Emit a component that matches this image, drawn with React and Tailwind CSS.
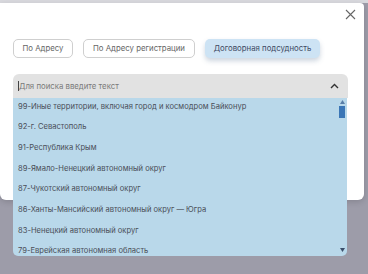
import React from "react";

const items = [
  "99-Иные территории, включая город и космодром Байконур",
  "92-г. Севастополь",
  "91-Республика Крым",
  "89-Ямало-Ненецкий автономный округ",
  "87-Чукотский автономный округ",
  "86-Ханты-Мансийский автономный округ — Югра",
  "83-Ненецкий автономный округ",
  "79-Еврейская автономная область",
];

export default function App() {
  return (
    <div
      className="relative w-[368px] h-[274px] overflow-hidden bg-[#9d9ca9]"
      style={{ fontFamily: "Inter, 'Noto Sans', sans-serif" }}
    >
      <div className="h-[3px] bg-[#d9d9de]" />
      <div className="w-[364px] h-[197px] bg-white rounded-b-[6px] rounded-tr-[4px] shadow-[0_2px_6px_rgba(0,0,0,0.15)] pt-[6px] px-[13px]">
        <div className="flex justify-end pr-[1px]">
          <svg width="11" height="11" viewBox="0 0 11 11" className="mr-[-6px]">
            <path d="M1 1L10 10M10 1L1 10" stroke="#666" strokeWidth="1.1" />
          </svg>
        </div>
        <div className="flex gap-[10px] mt-[19px]">
          <div className="h-[19px] w-[60px] flex items-center justify-center rounded-[5px] border border-[#cfcfcf] text-[7.8px] text-[#666]">
            По Адресу
          </div>
          <div className="h-[19px] w-[112px] flex items-center justify-center rounded-[5px] border border-[#cfcfcf] text-[7.8px] text-[#666]">
            По Адресу регистрации
          </div>
          <div className="h-[19px] w-[115px] flex items-center justify-center rounded-[5px] bg-[#cde3f4] text-[7.8px] text-[#3d4a63] shadow-[0_3px_5px_rgba(60,90,130,0.25)]">
            Договорная подсудность
          </div>
        </div>
        <div className="mt-[16px] w-[335px] h-[24px] bg-[#e2e2e2] rounded-t-[6px] flex items-center pl-[5px] pr-[9px]">
          <div className="w-px h-[10px] bg-[#444]" />
          <span className="text-[7.8px] text-[#7a7a7a] pt-[1px]">Для поиска введите текст</span>
          <svg width="9" height="6" viewBox="0 0 9 6" className="ml-auto">
            <path d="M1 5L4.5 1.5L8 5" fill="none" stroke="#333" strokeWidth="1.4" />
          </svg>
        </div>
      </div>
      <div className="absolute left-[13px] top-[98px] w-[334px] h-[158px] bg-[#b9d8ea] rounded-b-[5px] overflow-hidden flex">
        <div className="flex-1 flex flex-col mt-[-2px]">
          {items.map((t) => (
            <div key={t} className="shrink-0 h-[20.7px] flex items-center pl-[5px] text-[7.6px] text-[#4a4e58] whitespace-nowrap">
              {t}
            </div>
          ))}
        </div>
        <div className="w-[8px] mr-[1px] flex flex-col items-center pt-[2px]">
          <svg width="5" height="4" viewBox="0 0 5 4">
            <path d="M0 4L2.5 0L5 4Z" fill="#5a7fa8" />
          </svg>
          <div className="mt-[2px] w-[6px] h-[12px] bg-[#3b76b6]" />
          <div className="flex-1" />
          <svg width="5" height="4" viewBox="0 0 5 4" className="mb-[4px]">
            <path d="M0 0L5 0L2.5 4Z" fill="#3a4f6a" />
          </svg>
        </div>
      </div>
    </div>
  );
}
